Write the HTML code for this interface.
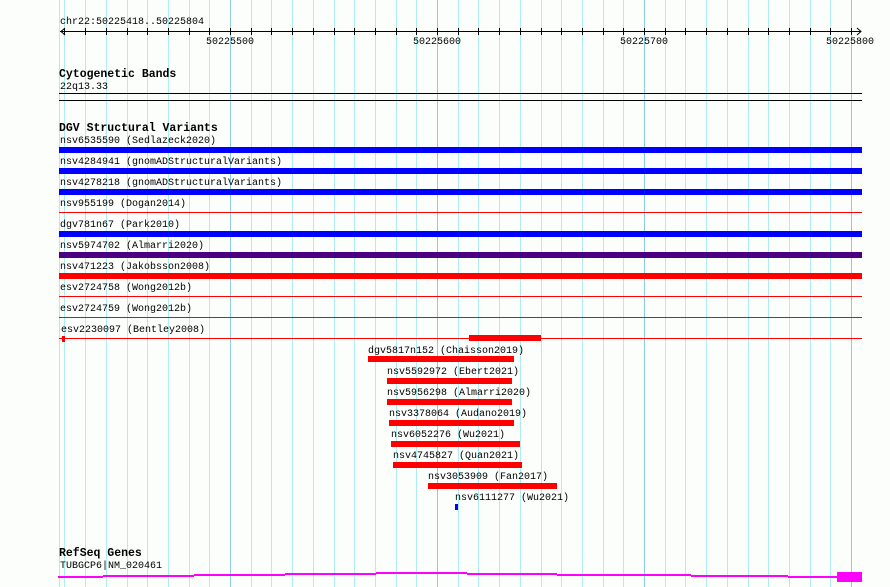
<!DOCTYPE html>
<html><head><meta charset="utf-8"><style>
body{margin:0;width:890px;height:587px;background:#fcfefb;position:relative;overflow:hidden;font-family:"Liberation Mono",monospace;font-size:10px;color:#000}
.t{position:absolute;line-height:10px;white-space:pre;margin-top:2px}
.b{position:absolute;font-weight:bold;font-size:11.5px;line-height:12px;white-space:pre;margin-top:1px}
.r{position:absolute}
</style></head><body>
<svg width="890" height="587" style="position:absolute;left:0;top:0">
<g id="g"></g>
</svg>
<script>
var s='';
s+='<line x1="59.5" y1="0" x2="59.5" y2="587" stroke="#aeeef0"/>';
for(var k=-8;k<=30;k++){var x=Math.round(230+20.7*k)+0.5;var maj=(k%10==0);
s+='<line x1="'+x+'" y1="0" x2="'+x+'" y2="587" stroke="'+(maj?'#8ccbe8':'#aeeef0')+'"/>';
s+='<line x1="'+x+'" y1="28" x2="'+x+'" y2="35" stroke="#000"/>';}
s+='<line x1="60" y1="31.5" x2="861" y2="31.5" stroke="#000"/>';
s+='<polyline points="65,28 61,31.5 65,35" fill="none" stroke="#000"/>';
s+='<polyline points="857,28 861,31.5 857,35" fill="none" stroke="#000"/>';
s+='<line x1="59" y1="93.5" x2="862" y2="93.5" stroke="#000"/><line x1="59" y1="100.5" x2="862" y2="100.5" stroke="#000"/>';
var bars=[[147,'#0000ff',6],[168,'#0000ff',6],[189,'#0000ff',6],[212,'#ff0000',1],[231,'#0000ff',6],[252,'#4b0082',6],[273,'#ff0000',6],[296,'#ff0000',1],[317,'#ff0000',1],[338,'#ff0000',1]];
bars.forEach(function(b){s+='<rect x="59" y="'+b[0]+'" width="803" height="'+b[2]+'" fill="'+b[1]+'"/>';});
s+='<rect x="62" y="336" width="3" height="6" fill="#f00"/>';
var sb=[[469,335,72],[368,356,146],[387,378,125],[387,399,125],[389,420,125],[391,441,129],[393,462,129],[428,483,129]];
sb.forEach(function(b){s+='<rect x="'+b[0]+'" y="'+b[1]+'" width="'+b[2]+'" height="6" fill="#f00"/>';});
s+='<rect x="455" y="504" width="3" height="6" fill="#00f"/>';
var g=[[58,576,103],[103,575,194],[194,574,285],[285,573,376],[376,572,467],[467,573,557],[557,574,594],[594,574,691],[691,575,788],[788,576,837]];
g.forEach(function(a){s+='<rect x="'+a[0]+'" y="'+a[1]+'" width="'+(a[2]-a[0])+'" height="2" fill="#f0f"/>';});
s+='<rect x="837" y="572" width="25" height="10" fill="#f0f"/>';
document.getElementById('g').innerHTML=s;
</script>
<div class="t" style="left:60px;top:16px">chr22:50225418..50225804</div>
<div class="t" style="left:206px;top:36px">50225500</div>
<div class="t" style="left:413px;top:36px">50225600</div>
<div class="t" style="left:620px;top:36px">50225700</div>
<div class="t" style="left:826px;top:36px">50225800</div>
<div class="b" style="left:59px;top:68px">Cytogenetic Bands</div>
<div class="t" style="left:60px;top:81px">22q13.33</div>
<div class="b" style="left:59px;top:122px">DGV Structural Variants</div>
<div class="t" style="left:60px;top:135px">nsv6535590 (Sedlazeck2020)</div>
<div class="t" style="left:60px;top:156px">nsv4284941 (gnomADStructuralVariants)</div>
<div class="t" style="left:60px;top:177px">nsv4278218 (gnomADStructuralVariants)</div>
<div class="t" style="left:60px;top:198px">nsv955199 (Dogan2014)</div>
<div class="t" style="left:60px;top:219px">dgv781n67 (Park2010)</div>
<div class="t" style="left:60px;top:240px">nsv5974702 (Almarri2020)</div>
<div class="t" style="left:60px;top:261px">nsv471223 (Jakobsson2008)</div>
<div class="t" style="left:60px;top:282px">esv2724758 (Wong2012b)</div>
<div class="t" style="left:60px;top:303px">esv2724759 (Wong2012b)</div>
<div class="t" style="left:61px;top:324px">esv2230097 (Bentley2008)</div>
<div class="t" style="left:368px;top:345px">dgv5817n152 (Chaisson2019)</div>
<div class="t" style="left:387px;top:366px">nsv5592972 (Ebert2021)</div>
<div class="t" style="left:387px;top:387px">nsv5956298 (Almarri2020)</div>
<div class="t" style="left:389px;top:408px">nsv3378064 (Audano2019)</div>
<div class="t" style="left:391px;top:429px">nsv6052276 (Wu2021)</div>
<div class="t" style="left:393px;top:450px">nsv4745827 (Quan2021)</div>
<div class="t" style="left:428px;top:471px">nsv3053909 (Fan2017)</div>
<div class="t" style="left:455px;top:492px">nsv6111277 (Wu2021)</div>
<div class="b" style="left:59px;top:547px">RefSeq Genes</div>
<div class="t" style="left:60px;top:560px">TUBGCP6|NM_020461</div>
</body></html>
